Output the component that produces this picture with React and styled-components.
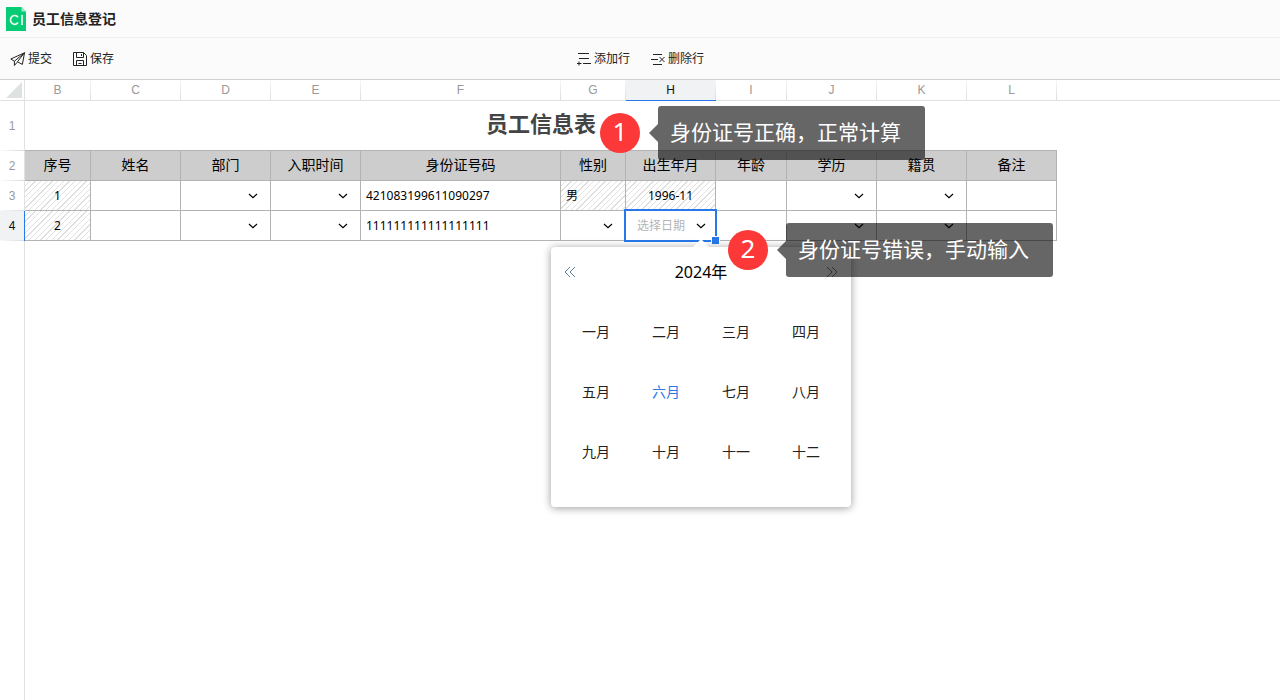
import { useState } from "react";
import styled, { createGlobalStyle } from "styled-components";

const columns = [
  { id: "B", title: "序号", width: 66 },
  { id: "C", title: "姓名", width: 90, type: "text" },
  { id: "D", title: "部门", width: 90, type: "select" },
  { id: "E", title: "入职时间", width: 90, type: "date" },
  { id: "F", title: "身份证号码", width: 200, type: "text" },
  { id: "G", title: "性别", width: 65, type: "select" },
  { id: "H", title: "出生年月", width: 90, type: "date" },
  { id: "I", title: "年龄", width: 71, type: "text" },
  { id: "J", title: "学历", width: 90, type: "select" },
  { id: "K", title: "籍贯", width: 90, type: "select" },
  { id: "L", title: "备注", width: 90, type: "text" },
];

const rows = [
  {
    number: 3,
    values: { B: "1", F: "421083199611090297", G: "男", H: "1996-11" },
    locked: ["B", "G", "H"],
  },
  {
    number: 4,
    values: { B: "2", F: "111111111111111111" },
    locked: ["B"],
  },
];

const months = [
  "一月", "二月", "三月", "四月",
  "五月", "六月", "七月", "八月",
  "九月", "十月", "十一", "十二",
];

const active = { column: "H", row: 4 };

export default function App() {
  return (
    <Page>
      <GlobalStyle />
      <TitleBar>
        <Logo />
        <h1>员工信息登记</h1>
      </TitleBar>
      <Toolbar>
        <ToolGroup>
          <ToolButton type="button">
            <SendIcon />
            提交
          </ToolButton>
          <ToolButton type="button">
            <SaveIcon />
            保存
          </ToolButton>
        </ToolGroup>
        <ToolGroup>
          <ToolButton type="button">
            <AddRowIcon />
            添加行
          </ToolButton>
          <ToolButton type="button">
            <DeleteRowIcon />
            删除行
          </ToolButton>
        </ToolGroup>
        <ToolGroup />
      </Toolbar>
      <Sheet>
        <Grid>
          <colgroup>
            <col style={{ width: 25 }} />
            {columns.map((column) => (
              <col key={column.id} style={{ width: column.width }} />
            ))}
            <col />
          </colgroup>
          <thead>
            <tr>
              <Corner aria-label="全选">
                <svg width="16" height="16" viewBox="0 0 16 16">
                  <path d="M16 0V16H0Z" fill="#dfe2e2" />
                </svg>
              </Corner>
              {columns.map((column) => (
                <ColumnHead
                  key={column.id}
                  scope="col"
                  $active={column.id === active.column}
                >
                  {column.id}
                </ColumnHead>
              ))}
              <ColumnHead $last />
            </tr>
          </thead>
          <tbody>
            <tr>
              <RowHead scope="row">1</RowHead>
              <SheetTitle colSpan={columns.length}>员工信息表</SheetTitle>
            </tr>
            <tr>
              <RowHead scope="row">2</RowHead>
              {columns.map((column) => (
                <FieldHead key={column.id}>{column.title}</FieldHead>
              ))}
            </tr>
            {rows.map((row) => (
              <tr key={row.number}>
                <RowHead scope="row" $active={row.number === active.row}>
                  {row.number}
                </RowHead>
                {columns.map((column) => (
                  <SheetCell key={column.id} column={column} row={row} />
                ))}
              </tr>
            ))}
          </tbody>
        </Grid>
        <Callout $left={600} $top={26}>
          <Badge>1</Badge>
          <Tip>身份证号正确，正常计算</Tip>
        </Callout>
        <Callout $left={728} $top={143}>
          <Badge>2</Badge>
          <Tip>身份证号错误，手动输入</Tip>
        </Callout>
      </Sheet>
    </Page>
  );
}

function SheetCell({ column, row }) {
  const value = row.values[column.id] || "";
  const label = `${column.title} ${row.number}`;

  if (row.locked.includes(column.id)) {
    return (
      <Cell $locked $align={column.id === "G" ? "left" : "center"}>
        {value}
      </Cell>
    );
  }

  if (column.type === "text") {
    return (
      <Cell>
        <TextInput aria-label={label} defaultValue={value} />
      </Cell>
    );
  }

  if (column.type === "select") {
    return (
      <Cell>
        <SelectInput aria-label={label} defaultValue="">
          <option value=""></option>
        </SelectInput>
        <Chevron />
      </Cell>
    );
  }

  const isActive = column.id === active.column && row.number === active.row;

  return (
    <Cell>
      <DateButton type="button" aria-label={isActive ? undefined : label}>
        {isActive && "选择日期"}
      </DateButton>
      <Chevron active={isActive} />
      {isActive && (
        <>
          <Selection />
          <MonthPicker />
        </>
      )}
    </Cell>
  );
}

function MonthPicker() {
  const [year, setYear] = useState(2024);
  const [month, setMonth] = useState("六月");

  return (
    <Picker>
      <PickerHeader>
        <YearButton
          type="button"
          aria-label="上一年"
          onClick={() => setYear(year - 1)}
        >
          <svg width="12" height="12" viewBox="0 0 12 12">
            <path d="M6 1L1 6L6 11M11 1L6 6L11 11" />
          </svg>
        </YearButton>
        <span>{year}年</span>
        <YearButton
          type="button"
          aria-label="下一年"
          onClick={() => setYear(year + 1)}
        >
          <svg width="12" height="12" viewBox="0 0 12 12">
            <path d="M1 1L6 6L1 11M6 1L11 6L6 11" />
          </svg>
        </YearButton>
      </PickerHeader>
      <Months>
        {months.map((name) => (
          <MonthButton
            key={name}
            type="button"
            $selected={name === month}
            onClick={() => setMonth(name)}
          >
            {name}
          </MonthButton>
        ))}
      </Months>
    </Picker>
  );
}

function Chevron({ active }) {
  return (
    <ChevronIcon
      $active={active}
      width="10"
      height="6"
      viewBox="0 0 10 6"
      aria-hidden="true"
    >
      <path d="M1 1L5 4.6L9 1" />
    </ChevronIcon>
  );
}

function Logo() {
  return (
    <svg width="20" height="24" viewBox="0 0 20 24" aria-hidden="true">
      <path d="M0 0H15.5L20 4.5V24H0Z" fill="#07cb75" />
      <path d="M15.5 0V4.5H20Z" fill="#9be9c8" />
      <g fill="none" stroke="#e9fbf3" strokeWidth="1.7">
        <path d="M12 10.2A4.2 4.4 0 1 0 12 15.6" />
        <path d="M16 8V18" />
      </g>
    </svg>
  );
}

function SendIcon() {
  return (
    <Icon viewBox="0 0 16 16">
      <path d="M14.5 1.8L0.8 8L4.4 10.2L14.5 1.8L12.4 13.4L7.4 10.8L14.5 1.8M4.4 10.2V14.5L7.2 11.2" />
    </Icon>
  );
}

function SaveIcon() {
  return (
    <Icon viewBox="0 0 16 16">
      <path d="M1.5 1.5H11.5L14.5 4.5V14.5H1.5ZM4.5 1.5V6.5H11.5V1.5M9.5 3V5M4.5 14.5V9.5H11.5V14.5M6.5 12.5H9.5" />
    </Icon>
  );
}

function AddRowIcon() {
  return (
    <Icon viewBox="0 0 16 16">
      <path d="M2 2.5H13M3 7.5H13M7 12.5H15M1 12.5H5.5M3 10.5V14.5" />
    </Icon>
  );
}

function DeleteRowIcon() {
  return (
    <Icon viewBox="0 0 16 16">
      <path d="M3 3.5H12M1 8.5H8M3 13.5H12M9.5 6L14.5 11M14.5 6L9.5 11" />
    </Icon>
  );
}

const GlobalStyle = createGlobalStyle`
  * {
    box-sizing: border-box;
  }

  body {
    margin: 0;
    background: #fff;
    color: #000;
    font-family: "Noto Sans", "Noto Sans CJK SC", sans-serif;
    font-size: 12px;
  }

  button,
  input,
  select {
    margin: 0;
    padding: 0;
    border: 0;
    background: none;
    color: inherit;
    font: inherit;
  }

  button {
    cursor: pointer;
  }
`;

const Page = styled.div`
  min-height: 100vh;
  display: flex;
  flex-direction: column;
`;

const TitleBar = styled.header`
  height: 38px;
  padding: 0 6px;
  display: flex;
  align-items: center;
  gap: 6px;
  background: #fbfbfb;
  border-bottom: 1px solid #efefef;

  h1 {
    margin: 0;
    font-size: 14px;
    font-weight: bold;
    line-height: 20px;
    color: #222;
  }
`;

const Toolbar = styled.div`
  height: 42px;
  padding: 1px 10px 0;
  display: grid;
  grid-template-columns: 1fr auto 1fr;
  align-items: center;
  background: #fbfbfb;
  border-bottom: 1px solid #d0d0d0;
`;

const ToolGroup = styled.div`
  display: flex;
  gap: 20px;
`;

const ToolButton = styled.button`
  display: flex;
  align-items: center;
  gap: 2px;
  line-height: 20px;
  color: #222;
`;

const Icon = styled.svg`
  width: 16px;
  height: 16px;
  fill: none;
  stroke: #222;
  stroke-width: 1;
`;

const Sheet = styled.main`
  position: relative;
  flex: 1;
  background: linear-gradient(#e1e1e1, #e1e1e1) 24px 0 / 1px 100% no-repeat;
`;

const Grid = styled.table`
  width: 100%;
  table-layout: fixed;
  border-collapse: separate;
  border-spacing: 0;
`;

const Corner = styled.td`
  height: 21px;
  padding: 0;
  border-right: 1px solid #e1e1e1;
  border-bottom: 1px solid #e1e1e1;

  svg {
    display: block;
    margin-left: 6px;
  }
`;

const ColumnHead = styled.th`
  height: 21px;
  padding: 0 1px 0 0;
  border-bottom: 1px solid ${(props) => (props.$active ? "#2878ea" : "#e1e1e1")};
  background: ${(props) => {
    if (props.$last) return "none";
    const line =
      "linear-gradient(#f7f7f7, #dcdcdc) right / 1px 100% no-repeat";
    return props.$active ? `${line}, #f0f2f4` : line;
  }};
  color: ${(props) => (props.$active ? "#111" : "#999")};
  font-family: "Liberation Sans", sans-serif;
  font-weight: normal;
  line-height: 20px;
`;

const RowHead = styled.th`
  padding: 0 0 1px;
  border-right: 1px solid ${(props) => (props.$active ? "#2878ea" : "#e1e1e1")};
  background: ${(props) => {
    const line =
      "linear-gradient(to right, #fafafa, #dcdcdc) bottom / 100% 1px no-repeat";
    return props.$active ? `${line}, #f0f2f4` : line;
  }};
  color: ${(props) => (props.$active ? "#111" : "#999")};
  font-family: "Liberation Sans", sans-serif;
  font-weight: normal;
`;

const SheetTitle = styled.td`
  height: 50px;
  padding: 0 0 6px;
  border-bottom: 1px solid #b3b3b3;
  text-align: center;
  font-size: 22px;
  font-weight: bold;
  line-height: 32px;
  color: #444;
`;

const FieldHead = styled.th`
  height: 30px;
  padding: 0 0 2px;
  border-right: 1px solid #b3b3b3;
  border-bottom: 1px solid #b3b3b3;
  background: #cdcdcd;
  font-size: 14px;
  font-weight: normal;
  line-height: 20px;
`;

const Cell = styled.td`
  position: relative;
  height: 30px;
  padding: ${(props) => (props.$locked ? "0 5px" : "0")};
  border-right: 1px solid #b3b3b3;
  border-bottom: 1px solid #b3b3b3;
  background: ${(props) =>
    props.$locked
      ? "repeating-linear-gradient(135deg, #fff 0 3px, #e0e0e0 3px 4px)"
      : "none"};
  text-align: ${(props) => props.$align || "left"};
  line-height: 20px;
`;

const TextInput = styled.input`
  display: block;
  width: 100%;
  height: 29px;
  padding: 0 5px;
  outline: none;
`;

const SelectInput = styled.select`
  display: block;
  width: 100%;
  height: 29px;
  appearance: none;
  outline: none;
`;

const DateButton = styled.button`
  display: block;
  width: 100%;
  height: 29px;
  padding-left: 11px;
  text-align: left;
  color: #b5b5b5;
`;

const ChevronIcon = styled.svg`
  position: absolute;
  top: 12px;
  right: ${(props) => (props.$active ? 9 : 12)}px;
  fill: none;
  stroke: #000;
  stroke-width: 1.2;
  pointer-events: none;
`;

const Selection = styled.div`
  position: absolute;
  inset: -2px;
  z-index: 1;
  border: 2px solid #2878ea;
  pointer-events: none;

  &::after {
    content: "";
    position: absolute;
    right: -5px;
    bottom: -5px;
    width: 7px;
    height: 7px;
    border: 1px solid #fff;
    background: #2878ea;
  }
`;

const Picker = styled.div`
  position: absolute;
  top: 36px;
  left: -75px;
  z-index: 2;
  width: 300px;
  padding: 0 10px 25px;
  border-radius: 4px;
  background: #fff;
  box-shadow: 0 1px 8px rgba(0, 0, 0, 0.4);

  &::before {
    content: "";
    position: absolute;
    top: -8px;
    left: 142px;
    border: 8px solid transparent;
    border-top: 0;
    border-bottom-color: #fff;
  }
`;

const PickerHeader = styled.div`
  height: 50px;
  margin-bottom: 5px;
  display: flex;
  align-items: center;
  justify-content: space-between;
  font-size: 16px;
`;

const YearButton = styled.button`
  width: 18px;
  height: 20px;
  display: grid;
  place-items: center;

  svg {
    fill: none;
    stroke: #5f7f9f;
    stroke-width: 1;
  }
`;

const Months = styled.div`
  display: grid;
  grid-template-columns: repeat(4, 1fr);
  grid-auto-rows: 60px;
`;

const MonthButton = styled.button`
  font-size: 14px;
  color: ${(props) => (props.$selected ? "#2878ea" : "#222")};
`;

const Callout = styled.div`
  position: absolute;
  top: ${(props) => props.$top}px;
  left: ${(props) => props.$left}px;
  z-index: 3;
  display: flex;
  align-items: center;
  gap: 18px;
`;

const Badge = styled.div`
  width: 40px;
  height: 40px;
  display: grid;
  place-items: center;
  padding-bottom: 4px;
  border-radius: 50%;
  background: #fc3838;
  color: #fff;
  font-size: 26px;
  line-height: 36px;
`;

const Tip = styled.div`
  position: relative;
  height: 54px;
  padding: 0 24px 0 12px;
  border-radius: 3px;
  background: rgba(0, 0, 0, 0.6);
  color: #fff;
  font-size: 21px;
  line-height: 52px;
  white-space: nowrap;

  &::before {
    content: "";
    position: absolute;
    top: 18px;
    right: 100%;
    border: 9px solid transparent;
    border-left: 0;
    border-right-color: rgba(0, 0, 0, 0.6);
  }
`;
